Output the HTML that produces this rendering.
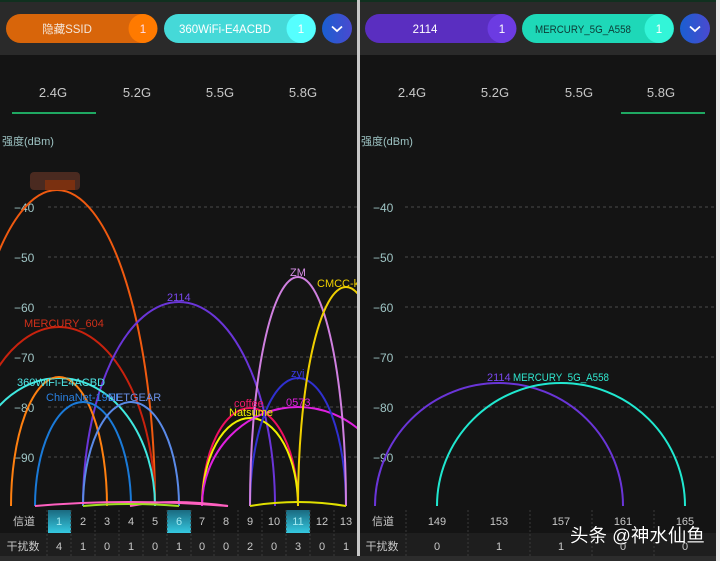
<!DOCTYPE html>
<html><head><meta charset="utf-8"><style>
html,body{margin:0;padding:0;background:#141414;width:720px;height:561px;overflow:hidden;font-family:"Liberation Sans","Noto Sans CJK SC",sans-serif}
svg{display:block}
</style></head><body>
<svg width="720" height="561" viewBox="0 0 720 561" xmlns="http://www.w3.org/2000/svg" font-family="Liberation Sans, Noto Sans CJK SC, sans-serif">
<defs>
<linearGradient id="chev" x1="0" x2="1"><stop offset="0" stop-color="#1a5fd0"/><stop offset="1" stop-color="#4a4ad0"/></linearGradient>
<linearGradient id="cell" x1="0" y1="0" x2="0" y2="1"><stop offset="0" stop-color="#1a6a80"/><stop offset="1" stop-color="#35c8e0"/></linearGradient>
</defs>
<rect width="720" height="561" fill="#141414"/>
<rect x="0" y="0" width="357" height="55" fill="#2a2a2a"/>
<rect x="360" y="0" width="360" height="55" fill="#2a2a2a"/>
<rect x="0" y="0" width="720" height="2" fill="#10301f"/>
<rect x="357" y="0" width="3" height="561" fill="#c8c8c8"/>
<rect x="716" y="0" width="4" height="561" fill="#e8e8e8"/>
<rect x="6" y="14" width="151" height="29" rx="14.5" fill="#d8650a"/>
<circle cx="143" cy="28.5" r="14.5" fill="#ff7a00"/>
<text x="67" y="33" font-size="11.5" fill="#f4e6da" text-anchor="middle">隐藏SSID</text>
<text x="143" y="33" font-size="11.5" fill="#fde" text-anchor="middle">1</text>
<rect x="164" y="14" width="152" height="29" rx="14.5" fill="#45d9d8"/>
<circle cx="301" cy="28.5" r="14.5" fill="#55ffff"/>
<text x="225" y="33" font-size="11.5" fill="#fff" text-anchor="middle">360WiFi-E4ACBD</text>
<text x="301" y="33" font-size="11.5" fill="#fff" text-anchor="middle">1</text>
<circle cx="337" cy="28.5" r="15" fill="url(#chev)"/>
<path d="M332 26.5 L337 31 L342 26.5" stroke="#fff" stroke-width="1.8" fill="none"/>
<rect x="365" y="14" width="151" height="29" rx="14.5" fill="#5a2ec0"/>
<circle cx="502" cy="28.5" r="14.5" fill="#6c3be2"/>
<text x="425" y="33" font-size="11.5" fill="#fff" text-anchor="middle">2114</text>
<text x="502" y="33" font-size="11.5" fill="#fff" text-anchor="middle">1</text>
<rect x="522" y="14" width="152" height="29" rx="14.5" fill="#1ed8b8"/>
<circle cx="659" cy="28.5" r="14.5" fill="#33f5d8"/>
<text x="583" y="33" font-size="11" fill="#0c3a35" text-anchor="middle" textLength="96" lengthAdjust="spacingAndGlyphs">MERCURY_5G_A558</text>
<text x="659" y="33" font-size="11.5" fill="#fff" text-anchor="middle">1</text>
<circle cx="695" cy="28.5" r="15" fill="url(#chev)"/>
<path d="M690 26.5 L695 31 L700 26.5" stroke="#fff" stroke-width="1.8" fill="none"/>
<g font-size="13" fill="#c8c8c8" text-anchor="middle">
<text x="53" y="97">2.4G</text><text x="137" y="97">5.2G</text><text x="220" y="97">5.5G</text><text x="303" y="97">5.8G</text>
<text x="412" y="97">2.4G</text><text x="495" y="97">5.2G</text><text x="579" y="97">5.5G</text><text x="661" y="97">5.8G</text>
</g>
<rect x="12" y="112" width="84" height="2" fill="#1fa862"/>
<rect x="621" y="112" width="84" height="2" fill="#1fa862"/>
<g font-size="11" fill="#9ec4c4">
<text x="2" y="145">强度(dBm)</text><text x="361" y="145">强度(dBm)</text>
</g>
<g stroke="#4a4a4a" stroke-dasharray="3,3" stroke-width="1">
<path d="M48 207H357M48 257H357M48 307H357M48 357H357M48 407H357M48 457H357"/>
<path d="M405 207H716M405 257H716M405 307H716M405 357H716M405 407H716M405 457H716"/>
</g>
<g font-size="12" fill="#9ec4c4">
<text x="14" y="212">−40</text><text x="14" y="262">−50</text><text x="14" y="312">−60</text><text x="14" y="362">−70</text><text x="14" y="412">−80</text><text x="14" y="462">−90</text>
<text x="373" y="212">−40</text><text x="373" y="262">−50</text><text x="373" y="312">−60</text><text x="373" y="362">−70</text><text x="373" y="412">−80</text><text x="373" y="462">−90</text>
</g>
<svg x="0" y="0" width="357" height="561">
<g fill="none" stroke-width="2">
<path d="M-41 506 A98 316 0 0 1 155 506" stroke="#f05a10"/>
<path d="M-37 506 A96 179 0 0 1 155 506" stroke="#c8220e"/>
<path d="M83 506 A96 204 0 0 1 275 506" stroke="#6a35d8"/>
<path d="M-37 506 A96 128 0 0 1 155 506" stroke="#40e8e0"/>
<path d="M11 506 A48 129 0 0 1 107 506" stroke="#ff8010"/>
<path d="M35 506 A48 104 0 0 1 131 506" stroke="#1a7ad8"/>
<path d="M83 506 A48 104 0 0 1 179 506" stroke="#5a8ae8"/>
<path d="M202 506 A48 98 0 0 1 298 506" stroke="#f01060"/>
<path d="M202 506 A48 88 0 0 1 298 506" stroke="#f0f000"/>
<path d="M202 506 A96 99 0 0 1 394 506" stroke="#e020e0"/>
<path d="M250 506 A48 128 0 0 1 346 506" stroke="#3030d0"/>
<path d="M250 506 A48 229 0 0 1 346 506" stroke="#d080e0"/>
<path d="M298 506 A48 219 0 0 1 394 506" stroke="#f0d000"/>
<path d="M35 506 Q130 498 228 506" stroke="#ff60c0"/>
<path d="M130 506 Q170 498 228 506" stroke="#ff60c0"/>
<path d="M83 506 Q130 502 179 506" stroke="#a0e020"/>
<path d="M250 506 Q298 498 346 506" stroke="#e0e000"/>
</g>
<g font-size="11">
<rect x="30" y="172" width="50" height="18" rx="4" fill="#4a2a20"/>
<rect x="45" y="180" width="30" height="10" fill="#7a3010"/>
<text x="24" y="327" fill="#d0301a">MERCURY_604</text>
<text x="167" y="301" fill="#7a48f0">2114</text>
<text x="290" y="276" fill="#d890e8">ZM</text>
<text x="317" y="287" fill="#f0d000">CMCC-k</text>
<text x="17" y="386" fill="#50e8e8">360WiFi-E4ACBD</text>
<text x="46" y="401" fill="#2a80e0">ChinaNet-19EE</text>
<text x="108" y="401" fill="#6a90e8">NETGEAR</text>
<text x="234" y="407" fill="#f01868">coffee</text>
<text x="286" y="406" fill="#e020e0">0573</text>
<text x="229" y="416" fill="#f0f000">Natsume</text>
<text x="291" y="377" fill="#3a3ae0">zyj</text>
</g>
</svg>
<g fill="none" stroke-width="2">
<path d="M375 506 A124 123 0 0 1 623 506" stroke="#6a35d8"/>
<path d="M437 506 A124 123 0 0 1 685 506" stroke="#20e8d0"/>
</g>
<text x="487" y="381" font-size="11" fill="#7a48f0">2114</text>
<text x="513" y="381" font-size="11" fill="#30e8d0" textLength="96" lengthAdjust="spacingAndGlyphs">MERCURY_5G_A558</text>
<rect x="0" y="533" width="357" height="23" fill="#1e1e1e"/>
<rect x="360" y="533" width="356" height="23" fill="#1e1e1e"/>
<rect x="0" y="556" width="716" height="5" fill="#2c2c2c"/>
<rect x="48" y="510" width="23" height="23" fill="url(#cell)"/>
<rect x="167" y="510" width="24" height="23" fill="url(#cell)"/>
<rect x="286" y="510" width="24" height="23" fill="url(#cell)"/>
<g stroke="#3a3a3a" stroke-dasharray="2,2">
<path d="M47 510V556M71 510V556M95 510V556M119 510V556M143 510V556M167 510V556M191 510V556M214 510V556M238 510V556M262 510V556M286 510V556M310 510V556M334 510V556"/>
<path d="M406 510V556M468 510V556M530 510V556M592 510V556M654 510V556"/>
</g>
<g font-size="11" fill="#c8c8c8" text-anchor="middle">
<text x="24" y="525">信道</text><text x="23" y="550">干扰数</text>
<text x="383" y="525">信道</text><text x="382" y="550">干扰数</text>
<text x="59" y="525" fill="#a0e8f0">1</text><text x="83" y="525">2</text><text x="107" y="525">3</text><text x="131" y="525">4</text><text x="155" y="525">5</text><text x="179" y="525" fill="#a0e8f0">6</text><text x="202" y="525">7</text><text x="226" y="525">8</text><text x="250" y="525">9</text><text x="274" y="525">10</text><text x="298" y="525" fill="#a0e8f0">11</text><text x="322" y="525">12</text><text x="346" y="525">13</text>
<text x="59" y="550">4</text><text x="83" y="550">1</text><text x="107" y="550">0</text><text x="131" y="550">1</text><text x="155" y="550">0</text><text x="179" y="550">1</text><text x="202" y="550">0</text><text x="226" y="550">0</text><text x="250" y="550">2</text><text x="274" y="550">0</text><text x="298" y="550">3</text><text x="322" y="550">0</text><text x="346" y="550">1</text>
<text x="437" y="525">149</text><text x="499" y="525">153</text><text x="561" y="525">157</text><text x="623" y="525">161</text><text x="685" y="525">165</text>
<text x="437" y="550">0</text><text x="499" y="550">1</text><text x="561" y="550">1</text><text x="623" y="550">0</text><text x="685" y="550">0</text>
</g>
<text x="570" y="542" font-size="18.5" fill="#fff" stroke="#000" stroke-width="0.6" paint-order="stroke">头条 @神水仙鱼</text>
</svg>
</body></html>
